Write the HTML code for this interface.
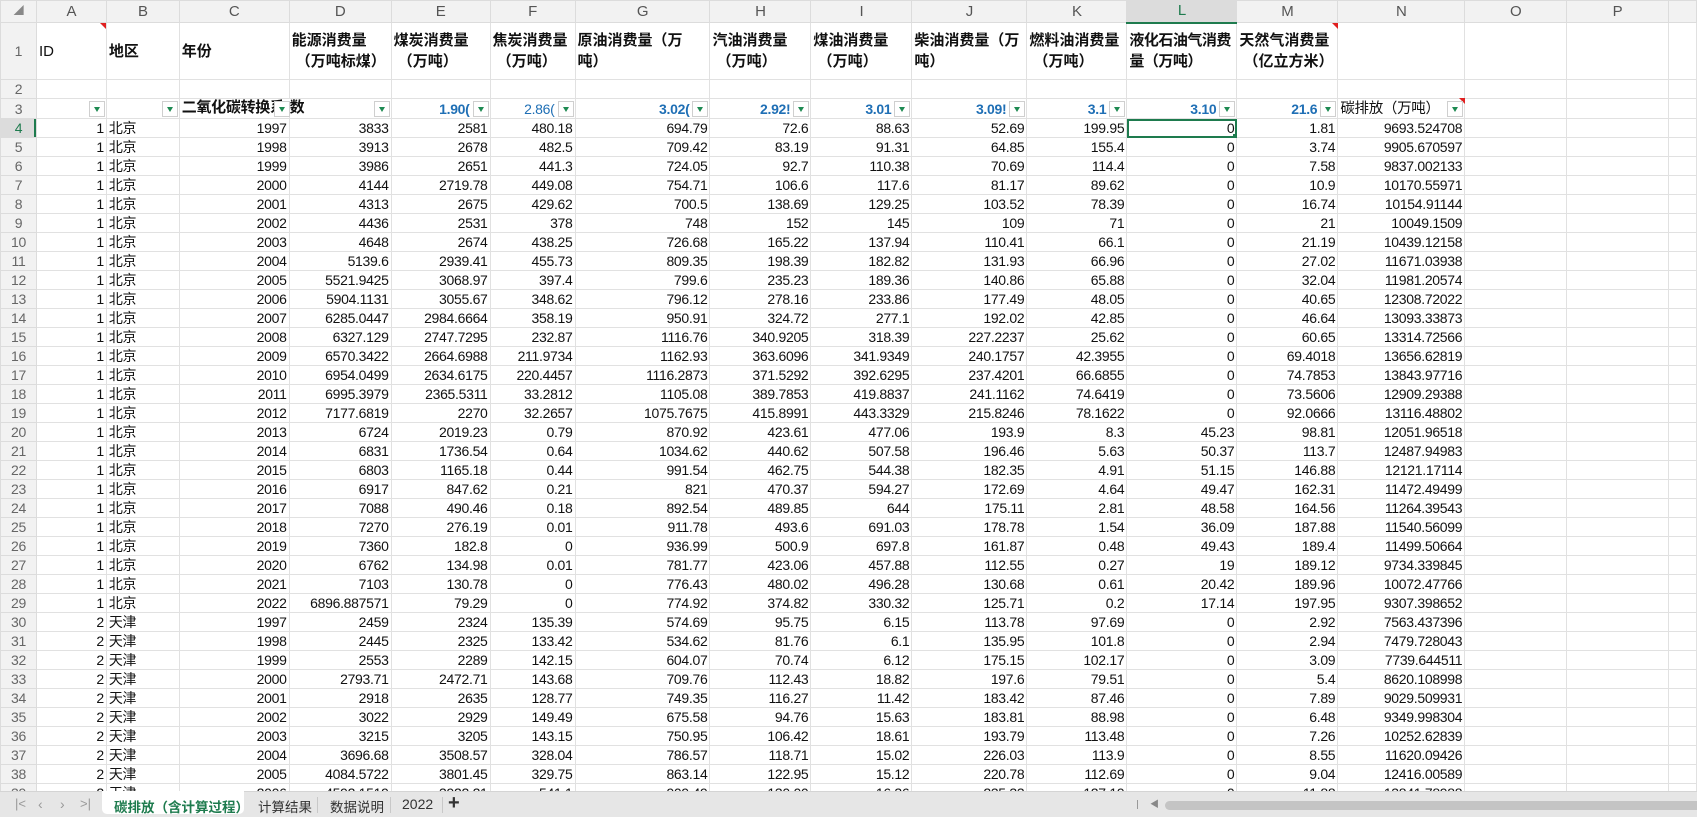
<!DOCTYPE html>
<html><head><meta charset="utf-8">
<style>
*{margin:0;padding:0;box-sizing:border-box}
body{width:1697px;height:817px;overflow:hidden;background:#fff;font-family:"Liberation Sans","Noto Sans CJK SC",sans-serif;font-size:14px;color:#111;position:relative}
table{border-collapse:collapse;table-layout:fixed;position:absolute;left:0;top:0}
td{border:1px solid #e1e1e1;height:19px;padding:0 2px;white-space:nowrap;overflow:hidden;text-align:right;line-height:18px;letter-spacing:-0.3px}
td.h{background:#f2f2f2;color:#555;text-align:center;font-size:15px;border-color:#dcdcdc}
td.rh{background:#f2f2f2;color:#666;text-align:center;font-size:14px;border-color:#dcdcdc}
td.l{text-align:left}
tr.r1 td{height:57px;text-align:left;font-weight:bold;font-size:15px;line-height:21px;white-space:nowrap;vertical-align:middle;letter-spacing:0}
tr.r1 td.rh{font-weight:normal;text-align:center;font-size:14px}
tr.r2 td{height:19px}
tr.r3 td{height:20px;position:relative;overflow:visible}
.f{position:absolute;right:1px;top:2px;width:16px;height:16px;background:#fff;border:1px solid #cfcfcf;z-index:2}
.f:after{content:"";position:absolute;left:4px;top:5px;border-left:3.5px solid transparent;border-right:3.5px solid transparent;border-top:5px solid #1e8a52}
.b{color:#1f6fb5;font-weight:bold;padding-right:18px;overflow:hidden;display:block}
.bl{color:#1f6fb5;padding-right:18px;display:block}
.sel{outline:2px solid #1e7b4e;outline-offset:-2px;position:relative}
.sel:after{content:"";position:absolute;right:-3px;bottom:-3px;width:6px;height:6px;background:#1e7b4e}
.red{position:absolute;width:0;height:0;border-top:6px solid #e02020;border-left:6px solid transparent}
#bar{position:absolute;left:0;top:791px;width:1697px;height:26px;background:#e6e6e6;border-top:1px solid #d4d4d4;font-size:14px;color:#333}
#bar span{position:absolute;top:4px}
</style></head><body>
<table>
<colgroup><col style="width:36px"><col style="width:70px"><col style="width:73px"><col style="width:110px"><col style="width:102px"><col style="width:99px"><col style="width:85px"><col style="width:135px"><col style="width:101px"><col style="width:101px"><col style="width:115px"><col style="width:100px"><col style="width:110px"><col style="width:101px"><col style="width:127px"><col style="width:102px"><col style="width:102px"><col style="width:28px"></colgroup>
<tr style="height:22px"><td class="h" style="height:22px;font-size:10px;color:#888">◢</td><td class="h">A</td><td class="h">B</td><td class="h">C</td><td class="h">D</td><td class="h">E</td><td class="h">F</td><td class="h">G</td><td class="h">H</td><td class="h">I</td><td class="h">J</td><td class="h">K</td><td class="h" style="background:#dcdcdc;border-bottom:2px solid #1e7b4e;color:#1e7b4e">L</td><td class="h">M</td><td class="h">N</td><td class="h">O</td><td class="h">P</td><td class="h"></td></tr>
<tr class="r1"><td class="rh">1</td><td style="font-weight:normal">ID</td><td>地区</td><td>年份</td><td>能源消费量<br>&nbsp;（万吨标煤）</td><td>煤炭消费量<br>&nbsp;（万吨）</td><td>焦炭消费量<br>&nbsp;（万吨）</td><td>原油消费量（万<br>吨）</td><td>汽油消费量<br>&nbsp;（万吨）</td><td>煤油消费量<br>&nbsp;（万吨）</td><td>柴油消费量（万<br>吨）</td><td>燃料油消费量<br>&nbsp;（万吨）</td><td style="letter-spacing:-0.5px">液化石油气消费<br>量（万吨）</td><td>天然气消费量<br>&nbsp;（亿立方米）</td><td></td><td></td><td></td><td></td></tr>
<tr class="r2"><td class="rh">2</td><td></td><td></td><td></td><td></td><td></td><td></td><td></td><td></td><td></td><td></td><td></td><td></td><td></td><td></td><td></td><td></td><td></td></tr>
<tr class="r3"><td class="rh">3</td><td><i class="f"></i></td><td><i class="f"></i></td><td style="text-align:left;font-weight:bold;z-index:1"><span style="position:absolute;left:2px;top:0;width:100px;overflow:hidden;font-size:15px">二氧化碳转换系数</span><i class="f" style="right:-1px"></i></td><td style="text-align:left;font-weight:bold"><span style="position:absolute;left:-2px;top:0;background:#fff;width:20px;height:18px"></span><span style="position:absolute;left:0;top:0;font-size:15px">数</span><i class="f"></i></td><td><span class="b">1.90(</span><i class="f"></i></td><td><span class="bl">2.86(</span><i class="f"></i></td><td><span class="b">3.02(</span><i class="f"></i></td><td><span class="b">2.92!</span><i class="f"></i></td><td><span class="b">3.01</span><i class="f"></i></td><td><span class="b">3.09!</span><i class="f"></i></td><td><span class="b">3.1</span><i class="f"></i></td><td><span class="b">3.10</span><i class="f"></i></td><td><span class="b">21.6</span><i class="f"></i></td><td style="text-align:left;font-size:14.5px">碳排放（万吨）<i class="f"></i></td><td></td><td></td><td></td></tr>
<tr><td class="rh" style="background:#dcdcdc;color:#1e7b4e;box-shadow:inset -2px 0 #1e7b4e">4</td><td>1</td><td class="l">北京</td><td>1997</td><td>3833</td><td>2581</td><td>480.18</td><td>694.79</td><td>72.6</td><td>88.63</td><td>52.69</td><td>199.95</td><td class="sel">0</td><td>1.81</td><td>9693.524708</td><td></td><td></td><td></td></tr>
<tr><td class="rh">5</td><td>1</td><td class="l">北京</td><td>1998</td><td>3913</td><td>2678</td><td>482.5</td><td>709.42</td><td>83.19</td><td>91.31</td><td>64.85</td><td>155.4</td><td>0</td><td>3.74</td><td>9905.670597</td><td></td><td></td><td></td></tr>
<tr><td class="rh">6</td><td>1</td><td class="l">北京</td><td>1999</td><td>3986</td><td>2651</td><td>441.3</td><td>724.05</td><td>92.7</td><td>110.38</td><td>70.69</td><td>114.4</td><td>0</td><td>7.58</td><td>9837.002133</td><td></td><td></td><td></td></tr>
<tr><td class="rh">7</td><td>1</td><td class="l">北京</td><td>2000</td><td>4144</td><td>2719.78</td><td>449.08</td><td>754.71</td><td>106.6</td><td>117.6</td><td>81.17</td><td>89.62</td><td>0</td><td>10.9</td><td>10170.55971</td><td></td><td></td><td></td></tr>
<tr><td class="rh">8</td><td>1</td><td class="l">北京</td><td>2001</td><td>4313</td><td>2675</td><td>429.62</td><td>700.5</td><td>138.69</td><td>129.25</td><td>103.52</td><td>78.39</td><td>0</td><td>16.74</td><td>10154.91144</td><td></td><td></td><td></td></tr>
<tr><td class="rh">9</td><td>1</td><td class="l">北京</td><td>2002</td><td>4436</td><td>2531</td><td>378</td><td>748</td><td>152</td><td>145</td><td>109</td><td>71</td><td>0</td><td>21</td><td>10049.1509</td><td></td><td></td><td></td></tr>
<tr><td class="rh">10</td><td>1</td><td class="l">北京</td><td>2003</td><td>4648</td><td>2674</td><td>438.25</td><td>726.68</td><td>165.22</td><td>137.94</td><td>110.41</td><td>66.1</td><td>0</td><td>21.19</td><td>10439.12158</td><td></td><td></td><td></td></tr>
<tr><td class="rh">11</td><td>1</td><td class="l">北京</td><td>2004</td><td>5139.6</td><td>2939.41</td><td>455.73</td><td>809.35</td><td>198.39</td><td>182.82</td><td>131.93</td><td>66.96</td><td>0</td><td>27.02</td><td>11671.03938</td><td></td><td></td><td></td></tr>
<tr><td class="rh">12</td><td>1</td><td class="l">北京</td><td>2005</td><td>5521.9425</td><td>3068.97</td><td>397.4</td><td>799.6</td><td>235.23</td><td>189.36</td><td>140.86</td><td>65.88</td><td>0</td><td>32.04</td><td>11981.20574</td><td></td><td></td><td></td></tr>
<tr><td class="rh">13</td><td>1</td><td class="l">北京</td><td>2006</td><td>5904.1131</td><td>3055.67</td><td>348.62</td><td>796.12</td><td>278.16</td><td>233.86</td><td>177.49</td><td>48.05</td><td>0</td><td>40.65</td><td>12308.72022</td><td></td><td></td><td></td></tr>
<tr><td class="rh">14</td><td>1</td><td class="l">北京</td><td>2007</td><td>6285.0447</td><td>2984.6664</td><td>358.19</td><td>950.91</td><td>324.72</td><td>277.1</td><td>192.02</td><td>42.85</td><td>0</td><td>46.64</td><td>13093.33873</td><td></td><td></td><td></td></tr>
<tr><td class="rh">15</td><td>1</td><td class="l">北京</td><td>2008</td><td>6327.129</td><td>2747.7295</td><td>232.87</td><td>1116.76</td><td>340.9205</td><td>318.39</td><td>227.2237</td><td>25.62</td><td>0</td><td>60.65</td><td>13314.72566</td><td></td><td></td><td></td></tr>
<tr><td class="rh">16</td><td>1</td><td class="l">北京</td><td>2009</td><td>6570.3422</td><td>2664.6988</td><td>211.9734</td><td>1162.93</td><td>363.6096</td><td>341.9349</td><td>240.1757</td><td>42.3955</td><td>0</td><td>69.4018</td><td>13656.62819</td><td></td><td></td><td></td></tr>
<tr><td class="rh">17</td><td>1</td><td class="l">北京</td><td>2010</td><td>6954.0499</td><td>2634.6175</td><td>220.4457</td><td>1116.2873</td><td>371.5292</td><td>392.6295</td><td>237.4201</td><td>66.6855</td><td>0</td><td>74.7853</td><td>13843.97716</td><td></td><td></td><td></td></tr>
<tr><td class="rh">18</td><td>1</td><td class="l">北京</td><td>2011</td><td>6995.3979</td><td>2365.5311</td><td>33.2812</td><td>1105.08</td><td>389.7853</td><td>419.8837</td><td>241.1162</td><td>74.6419</td><td>0</td><td>73.5606</td><td>12909.29388</td><td></td><td></td><td></td></tr>
<tr><td class="rh">19</td><td>1</td><td class="l">北京</td><td>2012</td><td>7177.6819</td><td>2270</td><td>32.2657</td><td>1075.7675</td><td>415.8991</td><td>443.3329</td><td>215.8246</td><td>78.1622</td><td>0</td><td>92.0666</td><td>13116.48802</td><td></td><td></td><td></td></tr>
<tr><td class="rh">20</td><td>1</td><td class="l">北京</td><td>2013</td><td>6724</td><td>2019.23</td><td>0.79</td><td>870.92</td><td>423.61</td><td>477.06</td><td>193.9</td><td>8.3</td><td>45.23</td><td>98.81</td><td>12051.96518</td><td></td><td></td><td></td></tr>
<tr><td class="rh">21</td><td>1</td><td class="l">北京</td><td>2014</td><td>6831</td><td>1736.54</td><td>0.64</td><td>1034.62</td><td>440.62</td><td>507.58</td><td>196.46</td><td>5.63</td><td>50.37</td><td>113.7</td><td>12487.94983</td><td></td><td></td><td></td></tr>
<tr><td class="rh">22</td><td>1</td><td class="l">北京</td><td>2015</td><td>6803</td><td>1165.18</td><td>0.44</td><td>991.54</td><td>462.75</td><td>544.38</td><td>182.35</td><td>4.91</td><td>51.15</td><td>146.88</td><td>12121.17114</td><td></td><td></td><td></td></tr>
<tr><td class="rh">23</td><td>1</td><td class="l">北京</td><td>2016</td><td>6917</td><td>847.62</td><td>0.21</td><td>821</td><td>470.37</td><td>594.27</td><td>172.69</td><td>4.64</td><td>49.47</td><td>162.31</td><td>11472.49499</td><td></td><td></td><td></td></tr>
<tr><td class="rh">24</td><td>1</td><td class="l">北京</td><td>2017</td><td>7088</td><td>490.46</td><td>0.18</td><td>892.54</td><td>489.85</td><td>644</td><td>175.11</td><td>2.81</td><td>48.58</td><td>164.56</td><td>11264.39543</td><td></td><td></td><td></td></tr>
<tr><td class="rh">25</td><td>1</td><td class="l">北京</td><td>2018</td><td>7270</td><td>276.19</td><td>0.01</td><td>911.78</td><td>493.6</td><td>691.03</td><td>178.78</td><td>1.54</td><td>36.09</td><td>187.88</td><td>11540.56099</td><td></td><td></td><td></td></tr>
<tr><td class="rh">26</td><td>1</td><td class="l">北京</td><td>2019</td><td>7360</td><td>182.8</td><td>0</td><td>936.99</td><td>500.9</td><td>697.8</td><td>161.87</td><td>0.48</td><td>49.43</td><td>189.4</td><td>11499.50664</td><td></td><td></td><td></td></tr>
<tr><td class="rh">27</td><td>1</td><td class="l">北京</td><td>2020</td><td>6762</td><td>134.98</td><td>0.01</td><td>781.77</td><td>423.06</td><td>457.88</td><td>112.55</td><td>0.27</td><td>19</td><td>189.12</td><td>9734.339845</td><td></td><td></td><td></td></tr>
<tr><td class="rh">28</td><td>1</td><td class="l">北京</td><td>2021</td><td>7103</td><td>130.78</td><td>0</td><td>776.43</td><td>480.02</td><td>496.28</td><td>130.68</td><td>0.61</td><td>20.42</td><td>189.96</td><td>10072.47766</td><td></td><td></td><td></td></tr>
<tr><td class="rh">29</td><td>1</td><td class="l">北京</td><td>2022</td><td>6896.887571</td><td>79.29</td><td>0</td><td>774.92</td><td>374.82</td><td>330.32</td><td>125.71</td><td>0.2</td><td>17.14</td><td>197.95</td><td>9307.398652</td><td></td><td></td><td></td></tr>
<tr><td class="rh">30</td><td>2</td><td class="l">天津</td><td>1997</td><td>2459</td><td>2324</td><td>135.39</td><td>574.69</td><td>95.75</td><td>6.15</td><td>113.78</td><td>97.69</td><td>0</td><td>2.92</td><td>7563.437396</td><td></td><td></td><td></td></tr>
<tr><td class="rh">31</td><td>2</td><td class="l">天津</td><td>1998</td><td>2445</td><td>2325</td><td>133.42</td><td>534.62</td><td>81.76</td><td>6.1</td><td>135.95</td><td>101.8</td><td>0</td><td>2.94</td><td>7479.728043</td><td></td><td></td><td></td></tr>
<tr><td class="rh">32</td><td>2</td><td class="l">天津</td><td>1999</td><td>2553</td><td>2289</td><td>142.15</td><td>604.07</td><td>70.74</td><td>6.12</td><td>175.15</td><td>102.17</td><td>0</td><td>3.09</td><td>7739.644511</td><td></td><td></td><td></td></tr>
<tr><td class="rh">33</td><td>2</td><td class="l">天津</td><td>2000</td><td>2793.71</td><td>2472.71</td><td>143.68</td><td>709.76</td><td>112.43</td><td>18.82</td><td>197.6</td><td>79.51</td><td>0</td><td>5.4</td><td>8620.108998</td><td></td><td></td><td></td></tr>
<tr><td class="rh">34</td><td>2</td><td class="l">天津</td><td>2001</td><td>2918</td><td>2635</td><td>128.77</td><td>749.35</td><td>116.27</td><td>11.42</td><td>183.42</td><td>87.46</td><td>0</td><td>7.89</td><td>9029.509931</td><td></td><td></td><td></td></tr>
<tr><td class="rh">35</td><td>2</td><td class="l">天津</td><td>2002</td><td>3022</td><td>2929</td><td>149.49</td><td>675.58</td><td>94.76</td><td>15.63</td><td>183.81</td><td>88.98</td><td>0</td><td>6.48</td><td>9349.998304</td><td></td><td></td><td></td></tr>
<tr><td class="rh">36</td><td>2</td><td class="l">天津</td><td>2003</td><td>3215</td><td>3205</td><td>143.15</td><td>750.95</td><td>106.42</td><td>18.61</td><td>193.79</td><td>113.48</td><td>0</td><td>7.26</td><td>10252.62839</td><td></td><td></td><td></td></tr>
<tr><td class="rh">37</td><td>2</td><td class="l">天津</td><td>2004</td><td>3696.68</td><td>3508.57</td><td>328.04</td><td>786.57</td><td>118.71</td><td>15.02</td><td>226.03</td><td>113.9</td><td>0</td><td>8.55</td><td>11620.09426</td><td></td><td></td><td></td></tr>
<tr><td class="rh">38</td><td>2</td><td class="l">天津</td><td>2005</td><td>4084.5722</td><td>3801.45</td><td>329.75</td><td>863.14</td><td>122.95</td><td>15.12</td><td>220.78</td><td>112.69</td><td>0</td><td>9.04</td><td>12416.00589</td><td></td><td></td><td></td></tr>
<tr><td class="rh">39</td><td>2</td><td class="l">天津</td><td>2006</td><td>4592.1519</td><td>3922.21</td><td>541.1</td><td>909.49</td><td>130.00</td><td>16.36</td><td>235.33</td><td>127.19</td><td>0</td><td>11.88</td><td>13841.78988</td><td></td><td></td><td></td></tr>
</table>
<div class="red" style="left:100px;top:23px"></div>
<div class="red" style="left:1332px;top:23px"></div>
<div class="red" style="left:1459px;top:98px"></div>
<div id="bar">
<span style="left:15px;color:#999;font-size:13px">|&lt;</span>
<span style="left:38px;color:#999">‹</span>
<span style="left:60px;color:#999">›</span>
<span style="left:80px;color:#999;font-size:13px">&gt;|</span>
<div style="position:absolute;left:102px;top:-1px;width:142px;height:23px;background:#fff;border-radius:0 0 5px 5px"></div>
<span style="left:114px;color:#1e7b4e;font-weight:bold;font-size:13.5px">碳排放（含计算过程）</span>
<span style="left:258px;font-size:13.5px">计算结果</span>
<div style="position:absolute;left:317px;top:5px;width:1px;height:16px;background:#c8c8c8"></div>
<span style="left:330px;font-size:13.5px">数据说明</span>
<div style="position:absolute;left:390px;top:5px;width:1px;height:16px;background:#c8c8c8"></div>
<span style="left:402px">2022</span>
<div style="position:absolute;left:442px;top:5px;width:1px;height:16px;background:#c8c8c8"></div>
<span style="left:448px;font-size:20px;top:0;font-weight:bold">+</span>
<div style="position:absolute;left:1137px;top:8px;width:1px;height:9px;background:#999"></div>
<span style="left:1150px;top:5px;font-size:9px;color:#888">◀</span>
<div style="position:absolute;left:1165px;top:9px;width:540px;height:9px;background:#c4c4c4;border-radius:5px"></div>
</div>
</body></html>
